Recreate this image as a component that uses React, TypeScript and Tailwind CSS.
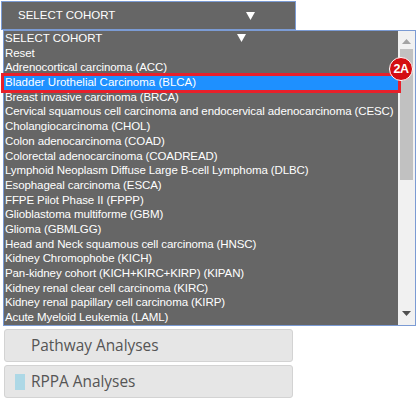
import React from 'react'

const COHORTS = [
  'Reset',
  'Adrenocortical carcinoma (ACC)',
  'Bladder Urothelial Carcinoma (BLCA)',
  'Breast invasive carcinoma (BRCA)',
  'Cervical squamous cell carcinoma and endocervical adenocarcinoma (CESC)',
  'Cholangiocarcinoma (CHOL)',
  'Colon adenocarcinoma (COAD)',
  'Colorectal adenocarcinoma (COADREAD)',
  'Lymphoid Neoplasm Diffuse Large B-cell Lymphoma (DLBC)',
  'Esophageal carcinoma (ESCA)',
  'FFPE Pilot Phase II (FPPP)',
  'Glioblastoma multiforme (GBM)',
  'Glioma (GBMLGG)',
  'Head and Neck squamous cell carcinoma (HNSC)',
  'Kidney Chromophobe (KICH)',
  'Pan-kidney cohort (KICH+KIRC+KIRP) (KIPAN)',
  'Kidney renal clear cell carcinoma (KIRC)',
  'Kidney renal papillary cell carcinoma (KIRP)',
  'Acute Myeloid Leukemia (LAML)',
]

const SELECTED = 'Bladder Urothelial Carcinoma (BLCA)'

function Triangle() {
  return (
    <svg width="9" height="8" viewBox="0 0 9 8" className="shrink-0">
      <path d="M0 0 H9 L4.5 8 Z" fill="#fff" />
    </svg>
  )
}

export default function App() {
  return (
    <div className="relative w-[417px] h-[401px] bg-white font-['Liberation_Sans',Arial,sans-serif] text-[11.5px] text-white">
      {/* closed select */}
      <div className="ml-[1px] mt-[1px] w-[295px] h-[29px] border border-[#7b9bd4] bg-[#666666] flex items-center pl-4 pr-[40px]">
        <span className="flex-1">SELECT COHORT</span>
        <Triangle />
      </div>

      {/* open list */}
      <div className="ml-[3px] w-[413px] h-[296px] border border-[#7b9bd4] bg-[#666666] flex">
        <div className="flex-1 overflow-hidden">
          <div className="h-[14.7px] leading-[14.7px] pl-[1px] flex items-center">
            <span className="w-[232px]">SELECT COHORT</span>
            <Triangle />
          </div>
          {COHORTS.map((c) => (
            <div
              key={c}
              className={
                c === SELECTED
                  ? 'h-[14.7px] leading-[14.7px] pl-[1px] bg-[#1e90ff] whitespace-nowrap'
                  : 'h-[14.7px] leading-[14.7px] pl-[1px] whitespace-nowrap tracking-[-0.1px]'
              }
            >
              {c}
            </div>
          ))}
        </div>
        {/* scrollbar */}
        <div className="w-[17px] bg-[#f1f1f1] flex flex-col items-center shrink-0">
          <svg width="9" height="5" viewBox="0 0 9 5" className="mt-[8px]">
            <path d="M0 5 H9 L4.5 0 Z" fill="#a3a3a3" />
          </svg>
          <div className="mt-[5px] w-[13px] h-[131px] bg-[#c1c1c1]" />
          <div className="flex-1" />
          <svg width="9" height="5" viewBox="0 0 9 5" className="mb-[9px]">
            <path d="M0 0 H9 L4.5 5 Z" fill="#505050" />
          </svg>
        </div>
      </div>

      {/* highlight annotation */}
      <div className="absolute left-[1px] top-[72px] w-[400px] h-[20px] border-[3px] border-[#e8202a]" />
      <div className="absolute left-[389px] top-[56px] w-[24px] h-[24px] rounded-full bg-[#d40d12] border-[1.5px] border-white flex items-center justify-center text-[12.5px] font-bold tracking-[-0.5px]">
        2A
      </div>

      {/* buttons */}
      <div className="ml-[4px] mt-[3px] flex flex-col gap-[3px] font-['Open_Sans',sans-serif] text-[15.4px] text-[#555555]">
        <div className="w-[289px] h-[33px] rounded-[3px] border border-[#d3d3d3] bg-[#e6e6e6] flex items-center pl-[26px]">
          Pathway Analyses
        </div>
        <div className="w-[289px] h-[33px] rounded-[3px] border border-[#d3d3d3] bg-[#e6e6e6] flex items-center pl-[10px]">
          <span className="w-[10px] h-[16px] bg-[#add8e6] mr-[6px]" />
          RPPA Analyses
        </div>
      </div>
    </div>
  )
}
